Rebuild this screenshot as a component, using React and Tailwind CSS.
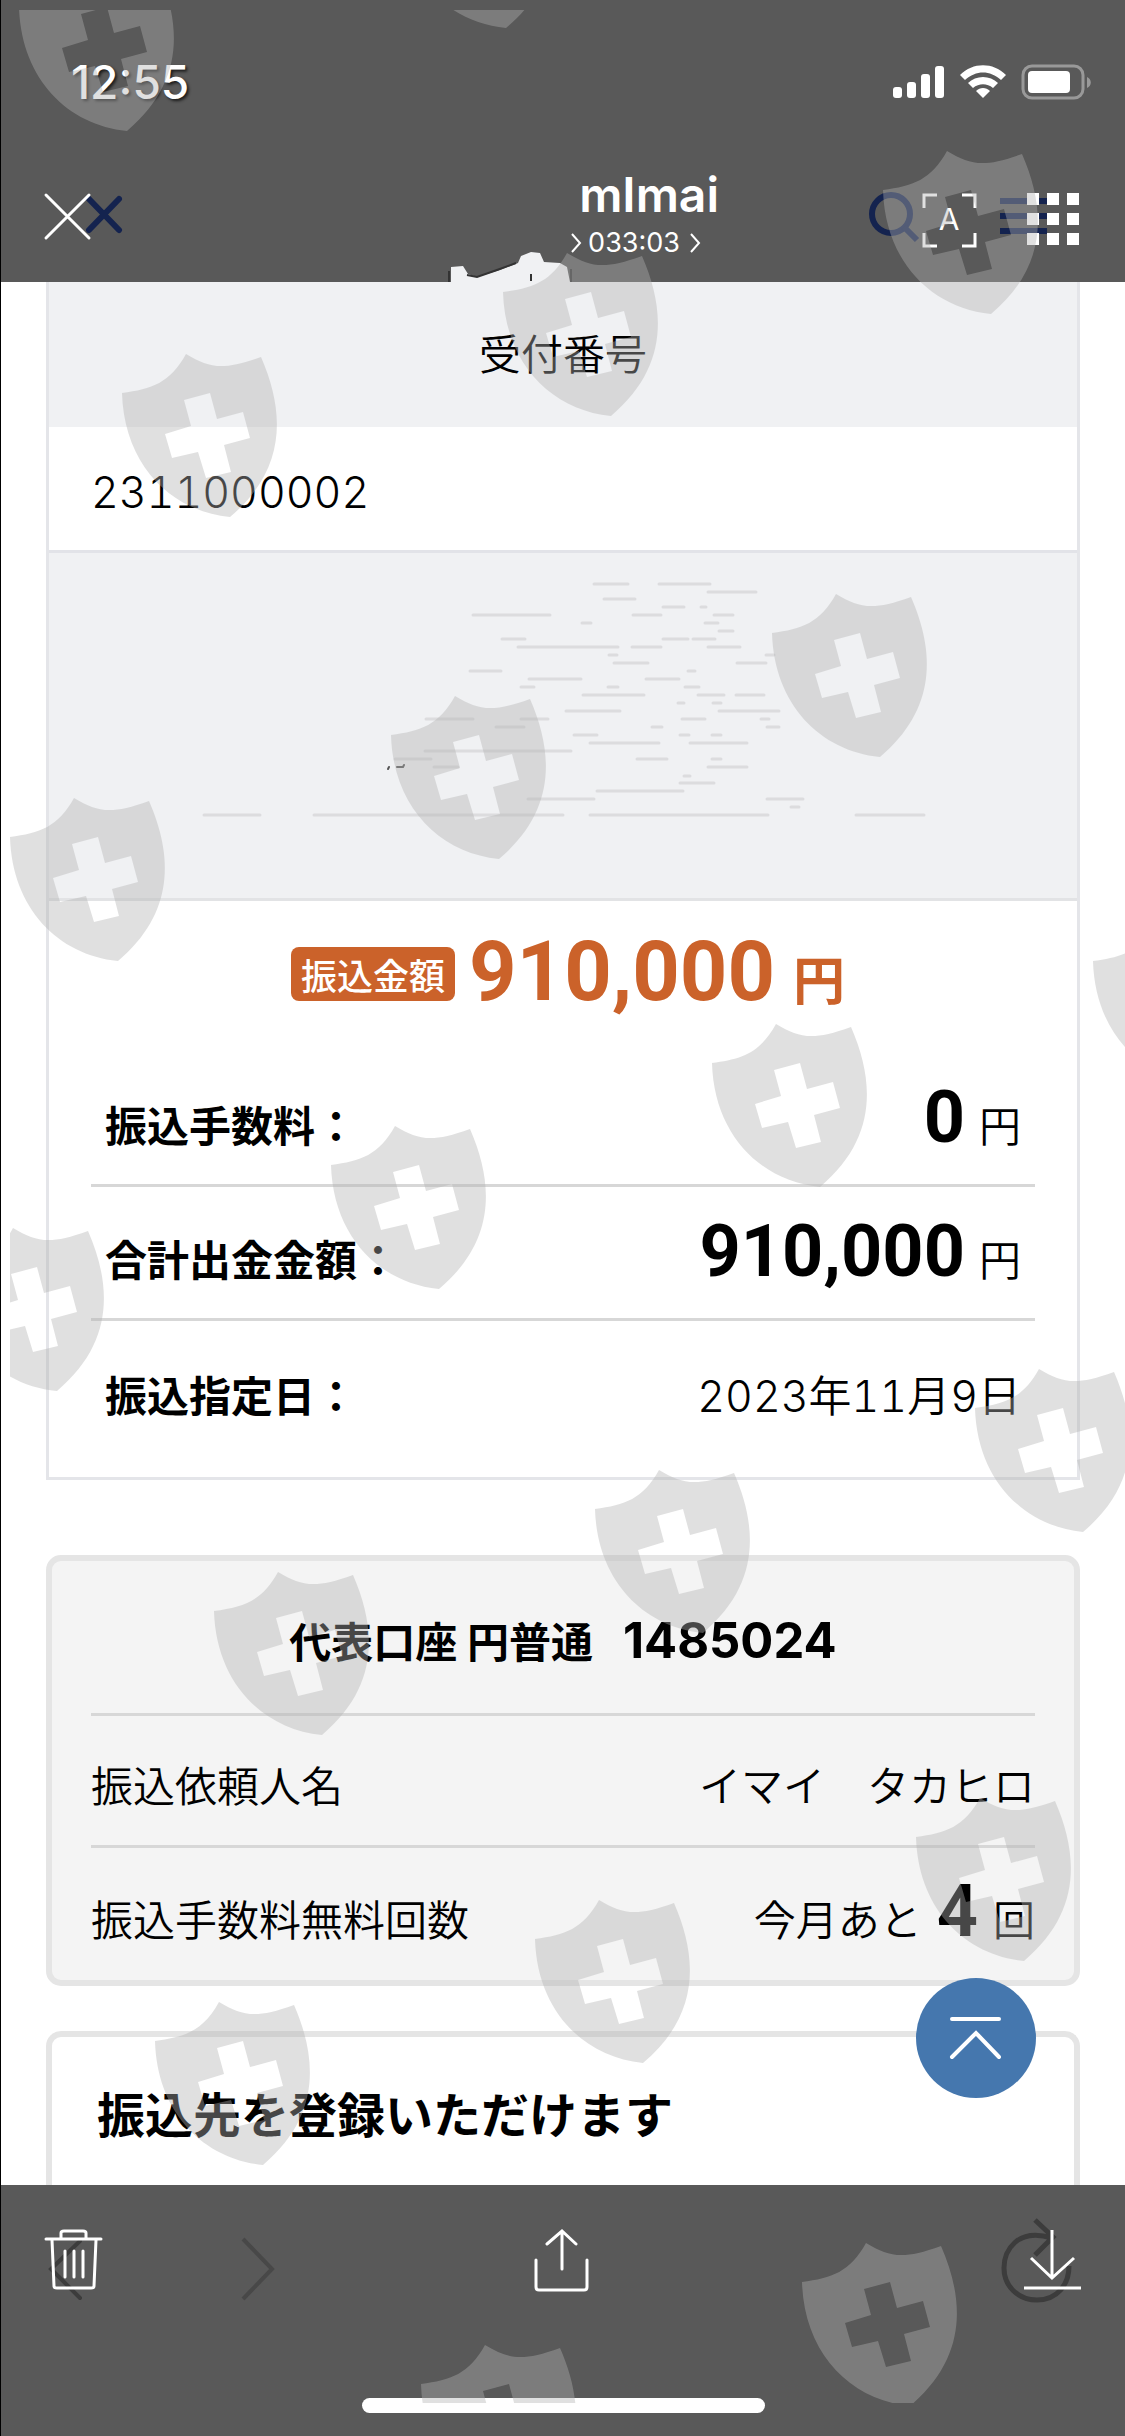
import React from "react";

const JP = "font-['Noto_Sans_CJK_JP',sans-serif]";
const LATIN = "font-[Inter,'Noto_Sans_CJK_JP',sans-serif]";
const NUM = "font-[Roboto,'Noto_Sans_CJK_JP',sans-serif]";

// top-left corner of every shield on the overlay
const SHIELDS = [
  [9, -42], [388, -145], [112, 344], [493, 243], [873, 141],
  [0, 788], [381, 686], [762, 584], [1083, 912], [321, 1116],
  [702, 1014], [-61, 1218], [965, 1359], [585, 1460], [204, 1562],
  [906, 1788], [525, 1890], [145, 1992], [792, 2233], [411, 2335],
];

// [from, to, y] of the thin strokes in the grey panel
const STROKES = [
  [594, 628, 584], [659, 710, 584], [708, 756, 592], [604, 635, 599],
  [663, 684, 607], [701, 706, 607], [473, 550, 615], [633, 661, 615],
  [714, 733, 615], [582, 591, 623], [705, 718, 623], [719, 733, 631],
  [502, 525, 639], [663, 688, 639], [693, 715, 639], [518, 618, 647],
  [632, 661, 647], [708, 740, 647], [609, 617, 655], [766, 774, 655],
  [614, 648, 663], [737, 766, 663], [470, 501, 671], [688, 695, 671],
  [529, 581, 679], [646, 679, 679], [521, 534, 687], [608, 618, 687],
  [685, 699, 687], [583, 644, 695], [698, 724, 695], [736, 764, 695],
  [678, 684, 703], [713, 721, 703], [566, 620, 711], [719, 779, 711],
  [426, 473, 719], [521, 548, 719], [682, 705, 719], [761, 769, 719],
  [496, 524, 727], [652, 662, 727], [767, 779, 727], [574, 597, 735],
  [680, 689, 735], [712, 721, 735], [590, 659, 743], [690, 747, 743],
  [425, 571, 751], [395, 431, 759], [637, 667, 759], [712, 721, 759],
  [434, 458, 767], [708, 747, 767], [684, 690, 776], [680, 714, 783],
  [597, 683, 791], [528, 594, 799], [767, 803, 799], [791, 799, 807],
  [204, 260, 815], [314, 563, 815], [590, 768, 815], [856, 924, 815],
];

const Watermark = () => (
  <div className="pointer-events-none absolute top-[10px] right-0 bottom-[34px] left-[9px] z-20 overflow-hidden opacity-40">
    <svg className="h-full w-full" fill="#b2b2b2" fillRule="evenodd" aria-hidden="true">
      {SHIELDS.map(([x, y]) => (
        <path
          key={`${x}-${y}`}
          transform={`translate(${x} ${y})`}
          d="M0 39C30 35 48 29 64 0C88 14 100 17 139 3C163 58 165 115 108 163C48 157 2 110 0 39Z M62 46L88 39L95 65L121 58L128 84L102 91L109 118L84 124L76 98L50 104L43 80L69 72Z"
        />
      ))}
    </svg>
  </div>
);

const StatusBar = () => (
  <div className="flex h-[164px] items-center justify-between pr-[34px] pl-[70px] text-white">
    <time className={`${LATIN} text-[46px] leading-none font-medium [text-shadow:2px_2px_3px_rgba(0,0,0,0.7)]`}>
      12:55
    </time>
    <svg className="h-[40px] w-[200px]" viewBox="891 62 200 40" fill="#fff" aria-label="電波 Wi-Fi バッテリー">
      <rect x="893" y="87" width="9" height="11" rx="3" />
      <rect x="907" y="82" width="9" height="16" rx="3" />
      <rect x="921" y="74" width="9" height="24" rx="3" />
      <rect x="935" y="66" width="9" height="32" rx="3" />
      <path d="M960 75C973 62 993 62 1006 75L1001 80C990 70 976 70 965 80Z" />
      <path d="M968 83C976 75 990 75 998 83L993 88C987 83 979 83 973 88Z" />
      <path d="M976 91C980 87 986 87 990 91L983 98Z" />
      <rect x="1023" y="66" width="60" height="32" rx="9" fill="none" stroke="#999" strokeWidth="3" />
      <rect x="1028" y="71" width="42" height="22" rx="4" />
      <path d="M1087 77C1092 79 1092 86 1087 88Z" fill="#999" />
    </svg>
  </div>
);

const Chevron = () => (
  <svg className="h-[22px] w-[11px]" viewBox="0 0 11 22" fill="none" stroke="#fff" strokeWidth="2">
    <path d="M1 2L9 11L1 20" />
  </svg>
);

const Header = () => (
  <header className="relative bg-[#595959] pb-[14px]">
    <StatusBar />
    <div className="flex h-[104px] items-center pr-[46px] pl-[42px] text-white">
      <button type="button" aria-label="閉じる">
        <svg className="h-[52px] w-[80px]" viewBox="43 190 80 52" fill="none" strokeLinecap="round">
          <path d="M89 199L119 230M119 199L89 230" stroke="#14234f" strokeWidth="6" />
          <path d="M46 195L89 238M89 195L46 238" stroke="#fff" strokeWidth="3" />
        </svg>
      </button>

      <div className={`${LATIN} flex flex-1 flex-col items-end pr-[149px]`}>
        <h1 className="text-[48px] leading-[54px] font-semibold">mImai</h1>
        <p className="flex items-center gap-[6px] pr-[18px] text-[27px] leading-[42px]">
          <Chevron />
          <span>033:03</span>
          <span className="pl-1">
            <Chevron />
          </span>
        </p>
      </div>

      <button type="button" aria-label="検索">
        <svg className="h-[56px] w-[52px]" viewBox="868 188 52 56" fill="none" stroke="#14234f" strokeWidth="6">
          <circle cx="891" cy="214" r="19" />
          <path d="M904 227L917 240" />
        </svg>
      </button>
      <button type="button" aria-label="文字認識">
        <svg className="h-[64px] w-[60px]" viewBox="920 184 60 64" fill="none" stroke="#fff" strokeWidth="3">
          <path d="M924 208V195H937M962 195H975V208M975 233V246H962M937 246H924V233" />
          <text x="949" y="230" fill="#fff" stroke="none" textAnchor="middle" className={`${LATIN} text-[30px]`}>
            A
          </text>
        </svg>
      </button>
      <button type="button" aria-label="メニュー" className="pl-[20px]">
        <svg className="h-[60px] w-[79px]" viewBox="1000 186 79 60" fill="#fff">
          <path d="M1000 198H1047V204H1000ZM1000 213H1047V219H1000ZM1000 228H1047V234H1000Z" fill="#14234f" />
          {[1027, 1047, 1067].map((x) =>
            [193, 213, 233].map((y) => <rect key={`${x}-${y}`} x={x} y={y} width="12" height="12" />)
          )}
        </svg>
      </button>
    </div>

    {/* ragged edge that hangs over the panel below */}
    <svg className="absolute bottom-0 left-[446px] h-[32px] w-[132px]" viewBox="447 250 132 32" aria-hidden="true">
      <path
        d="M451 282V267L463 266L468 274L477 277L500 270L518 263L521 256L531 252L540 253L544 262L560 263L567 267L570 282Z"
        fill="#f0f1f3"
      />
      <path d="M449 271V282M467 275L477 277L497 270L516 263M531 274V281M571 269V282" fill="none" stroke="#333" strokeWidth="2" />
    </svg>
  </header>
);

const Yen = () => <span className="pl-[14px] text-[42px] font-[350]">円</span>;

const FeeRow = ({ label, last, children }) => (
  <div className={`flex items-baseline justify-between px-[14px] ${last ? "pt-[8px]" : "border-b-3 border-[#d7d7d7]"}`}>
    <dt className="text-[42px] leading-[69px] font-bold">{label}</dt>
    <dd className="pt-[30px] pb-[26px] text-[42px] leading-[69px]">{children}</dd>
  </div>
);

const TransferCard = () => (
  <section className="mx-[45px] border-x-3 border-b-3 border-[#e4e5e9]">
    <h2 className="bg-[#f0f1f3] pt-[40px] pb-[45px] text-center text-[42px] leading-[60px] font-[350]">受付番号</h2>
    <p className={`${LATIN} border-b-3 border-[#e2e3e8] px-[42px] pt-[35px] pb-[28px] text-[43px] leading-[60px] font-[350] tabular-nums`}>
      2311000002
    </p>
    <div className="border-b-3 border-[#e2e3e5] bg-[#f0f1f3]">
      <svg className="w-full" viewBox="49 553 1028 345" stroke="#dcdcde" strokeWidth="3" strokeLinecap="round" aria-hidden="true">
        {STROKES.map(([from, to, y]) => (
          <path key={`${from}-${y}`} d={`M${from} ${y}H${to}`} />
        ))}
        <path d="M388 769L389 767M397 767H403L404 765" fill="none" stroke="#555" strokeWidth="2" />
      </svg>
    </div>

    <p className="flex items-baseline justify-center pt-[31px] pb-[41px] pl-[10px] text-[#cb622a]">
      <span className="mt-1 self-center rounded-lg bg-[#cb622a] px-[10px] text-[36px] leading-[54px] font-medium text-white">
        振込金額
      </span>
      <span className={`${NUM} pl-[14px] text-[83px] leading-[80px] font-bold`}>910,000</span>
      <span className="pl-[18px] text-[52px] leading-none font-bold">円</span>
    </p>

    <dl className="px-[42px] pb-[20px]">
      <FeeRow label="振込手数料：">
        <span className={`${NUM} text-[72px] font-bold`}>0</span>
        <Yen />
      </FeeRow>
      <FeeRow label="合計出金金額：">
        <span className={`${NUM} text-[72px] font-bold`}>910,000</span>
        <Yen />
      </FeeRow>
      <FeeRow label="振込指定日：" last>
        <time className={`${LATIN} text-[43px] font-[350] tabular-nums`}>2023年11月9日</time>
      </FeeRow>
    </dl>
  </section>
);

const AccountCard = () => (
  <section className="mx-[45px] mt-[75px] rounded-[15px] border-6 border-[#e5e5e5] bg-[#f4f4f4] px-[39px]">
    <h2 className="flex items-baseline justify-center gap-[30px] border-b-3 border-[#d7d7d7] pt-[49px] pb-[42px] text-[42px] leading-[60px] font-bold">
      代表口座 円普通
      <span className={`${LATIN} text-[49px]`}>1485024</span>
    </h2>
    <dl>
      <div className="flex items-baseline justify-between border-b-3 border-[#d7d7d7] pt-[38px] pb-[31px] text-[42px] leading-[60px] font-[350]">
        <dt>振込依頼人名</dt>
        <dd>イマイ　タカヒロ</dd>
      </div>
      <div className="flex items-baseline justify-between pt-[29px] pb-[28px] text-[42px] leading-[69px] font-[350]">
        <dt>振込手数料無料回数</dt>
        <dd>
          今月あと
          <span className={`${NUM} px-[15px] text-[72px] font-bold`}>4</span>回
        </dd>
      </div>
    </dl>
  </section>
);

const Footer = () => (
  <footer className="bg-[#595959] pt-[32px] pb-[24px]">
    <div className="flex items-center justify-between px-[42px]">
      <div className="flex items-center gap-[130px]">
        <button type="button" aria-label="削除">
          <svg className="h-[100px] w-[64px]" viewBox="43 2216 64 100" fill="none" strokeLinecap="round">
            <path d="M80 2240L51 2268L80 2297" stroke="#3c3c3c" strokeWidth="4" />
            <path d="M46 2238H101M61 2237V2232Q61 2230 64 2230H83Q86 2230 86 2232V2237" stroke="#fff" strokeWidth="3" />
            <path d="M52 2239L54 2285Q54 2287 57 2287H91Q94 2287 94 2285L96 2239M65 2250V2276M74 2250V2276M83 2250V2276" stroke="#fff" strokeWidth="3" />
          </svg>
        </button>
        <button type="button" aria-label="進む">
          <svg className="h-[100px] w-[44px]" viewBox="237 2216 44 100" fill="none" stroke="#484848" strokeWidth="4">
            <path d="M243 2238L272 2268L243 2298" />
          </svg>
        </button>
      </div>
      <button type="button" aria-label="共有" className="mr-[156px]">
        <svg className="h-[100px] w-[60px]" viewBox="532 2216 60 100" fill="none" stroke="#fff" strokeWidth="3" strokeLinecap="round">
          <path d="M536 2259V2286Q536 2289 539 2289H584Q587 2289 587 2286V2259M562 2268V2231M547 2243L562 2230L576 2243" />
        </svg>
      </button>
      <button type="button" aria-label="保存">
        <svg className="h-[100px] w-[84px]" viewBox="998 2216 84 100" fill="none">
          <path d="M1051 2237C1016 2226 1003 2250 1003 2267C1003 2285 1017 2299 1036 2299C1056 2299 1068 2284 1068 2265M1034 2219L1052 2236L1034 2254" stroke="#3c3c3c" strokeWidth="5" />
          <path d="M1051 2229V2277M1030 2257L1051 2277L1073 2257M1023 2287H1080" stroke="#fff" strokeWidth="3" />
        </svg>
      </button>
    </div>
    <div className="mx-auto mt-[81px] h-[15px] w-[403px] rounded-full bg-white" />
  </footer>
);

const App = () => {
  return (
    <div className={`${JP} relative flex min-h-screen flex-col border-l border-black bg-white text-black`}>
      <Header />

      <main className="relative flex-1">
        <TransferCard />
        <AccountCard />
        <section className="mx-[45px] mt-[45px] rounded-t-[15px] border-6 border-b-0 border-[#e5e5e5] px-[45px] pt-[40px] pb-[38px]">
          <h2 className="text-[48px] leading-[70px] font-bold">振込先を登録いただけます</h2>
        </section>

        {/* back to top */}
        <button
          type="button"
          aria-label="ページの先頭へ"
          className="absolute right-[89px] bottom-[87px] flex size-[120px] items-center justify-center rounded-full bg-[#4577ae]"
        >
          <svg className="size-[60px]" viewBox="945 2007 60 60" fill="none" stroke="#fff" strokeWidth="4" strokeLinecap="round">
            <path d="M951 2018H998M951 2056L975 2032L998 2056" />
          </svg>
        </button>
      </main>

      <Footer />
      <Watermark />
    </div>
  );
};

export default App;
